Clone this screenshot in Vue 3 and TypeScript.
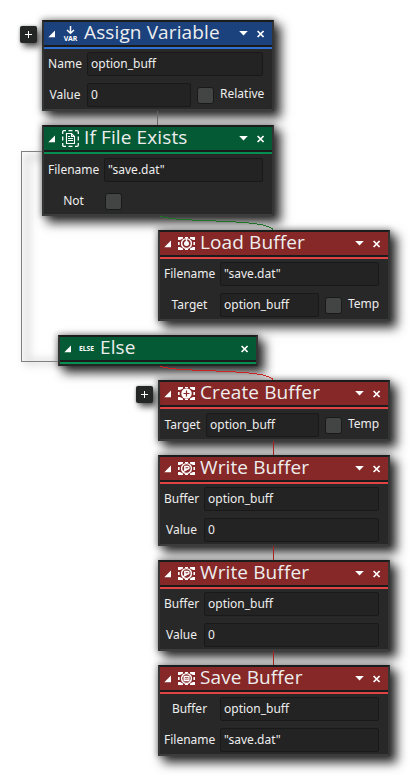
<script setup lang="ts">
type IconName = 'var' | 'file' | 'else' | 'load' | 'create' | 'write' | 'save'
interface Row {
  label: string
  value?: string
  check?: string
  checkbox?: boolean
}
interface ActionNode {
  id: number
  x: number
  y: number
  title: string
  icon: IconName
  tone: 'blue' | 'green' | 'red'
  size: string
  labels: string
  rows: Row[]
  menu: boolean
  add?: boolean
}

const nodes: ActionNode[] = [
  { id: 1, x: 42, y: 20, title: 'Assign Variable', icon: 'var', tone: 'blue', size: 'tall', labels: 'labels-s', menu: true, add: true,
    rows: [{ label: 'Name', value: 'option_buff' }, { label: 'Value', value: '0', check: 'Relative' }] },
  { id: 2, x: 42, y: 125, title: 'If File Exists', icon: 'file', tone: 'green', size: 'tall offset', labels: 'labels-l', menu: true,
    rows: [{ label: 'Filename', value: '"save.dat"' }, { label: 'Not', checkbox: true }] },
  { id: 3, x: 158, y: 230, title: 'Load Buffer', icon: 'load', tone: 'red', size: 'tall', labels: 'labels-l', menu: true,
    rows: [{ label: 'Filename', value: '"save.dat"' }, { label: 'Target', value: 'option_buff', check: 'Temp' }] },
  { id: 4, x: 58, y: 335, title: 'Else', icon: 'else', tone: 'green', size: 'bar', labels: '', menu: false, rows: [] },
  { id: 5, x: 158, y: 380, title: 'Create Buffer', icon: 'create', tone: 'red', size: 'short offset', labels: 'labels-t', menu: true, add: true,
    rows: [{ label: 'Target', value: 'option_buff', check: 'Temp' }] },
  { id: 6, x: 158, y: 455, title: 'Write Buffer', icon: 'write', tone: 'red', size: 'tall', labels: 'labels-m', menu: true,
    rows: [{ label: 'Buffer', value: 'option_buff' }, { label: 'Value', value: '0' }] },
  { id: 7, x: 158, y: 560, title: 'Write Buffer', icon: 'write', tone: 'red', size: 'tall', labels: 'labels-m', menu: true,
    rows: [{ label: 'Buffer', value: 'option_buff' }, { label: 'Value', value: '0' }] },
  { id: 8, x: 158, y: 665, title: 'Save Buffer', icon: 'save', tone: 'red', size: 'tall', labels: 'labels-l', menu: true,
    rows: [{ label: 'Buffer', value: 'option_buff' }, { label: 'Filename', value: '"save.dat"' }] },
]
</script>

<template>
  <main class="canvas">
    <div class="branch"></div>
    <div v-for="n in nodes" :key="'s' + n.id" class="shade" :class="n.size" :style="{ left: n.x + 'px', top: n.y + 'px' }"></div>
    <svg class="links" width="410" height="776" viewBox="0 0 410 776" fill="none">
      <path d="M157.500 111V125" stroke="#666" />
      <path d="M42 151.500H21.500V361.500H58" stroke="#808080" />
      <path d="M158 215C168 224 272 217 273.500 231" stroke="#1d7428" />
      <path d="M158 365C168 374 272 367 273.500 381" stroke="#cb2424" />
      <path d="M273.500 441V455M273.500 546V560M273.500 651V665" stroke="#a92222" />
    </svg>

    <section v-for="n in nodes" :key="n.id" class="node" :class="[n.tone, n.size]" :style="{ left: n.x + 'px', top: n.y + 'px' }">
      <button v-if="n.add" class="add" aria-label="Add">
        <svg width="17" height="17" viewBox="0 0 17 17"><path d="M5 8.500H12M8.500 5V12" stroke="#fff" /></svg>
      </button>
      <header class="head">
        <svg class="fold" width="8" height="8" viewBox="0 0 8 8"><path d="M7 0.500V7.200H0.300Z" fill="#fff" /></svg>
        <svg v-if="n.icon === 'var'" class="icon" width="17" height="17" viewBox="0 0 17 17">
          <path d="M8.500 1V8M5 5L8.500 8.200L12 5" fill="none" stroke="#fff" stroke-width="1.500" />
          <text x="1.800" y="16" font-size="7" font-weight="700" textLength="13.500" lengthAdjust="spacingAndGlyphs" fill="#fff">VAR</text>
        </svg>
        <svg v-else-if="n.icon === 'else'" class="icon" width="17" height="17" viewBox="0 0 17 17">
          <text x="0.900" y="10.700" font-size="6.500" font-weight="700" textLength="15.200" lengthAdjust="spacingAndGlyphs" fill="#fff">ELSE</text>
        </svg>
        <svg v-else-if="n.icon === 'file'" class="icon" width="17" height="17" viewBox="0 0 17 17" fill="none" stroke="#fff">
          <path d="M0.700 4V2Q0.700 0.700 2 0.700H4M6.500 0.700H10.500M13 0.700H15Q16.300 0.700 16.300 2V4M16.300 6.500V10.500M16.300 13V15Q16.300 16.300 15 16.300H13M10.500 16.300H6.500M4 16.300H2Q0.700 16.300 0.700 15V13M0.700 10.500V6.500" stroke-width="1.300" />
          <path d="M4.500 3.500H9.500L12.500 6.500V13.500H4.500ZM9.500 3.500V6.500H12.500M6 6.500H8M6 8.500H11M6 10.500H11" stroke-width="1.150" />
        </svg>
        <svg v-else class="icon" width="17" height="17" viewBox="0 0 17 17" fill="none" stroke="#fff">
          <path d="M0 2H5V3.500L2 5H0ZM17 2H12V3.500L15 5H17ZM0 15H5V13.500L2 12H0ZM17 15H12V13.500L15 12H17ZM0 7H1.600V10H0ZM15.400 7H17V10H15.400ZM7 2H10V3H7ZM7 14H10V15H7Z" fill="#fff" stroke="none" />
          <template v-if="n.icon === 'create'">
            <circle cx="8.500" cy="8.500" r="5.200" fill="#fff" stroke="none" />
            <path d="M5.500 8.500H11.500M8.500 5.500V11.500" stroke="#862828" stroke-width="1.200" />
          </template>
          <template v-else>
            <circle cx="8.500" cy="8.500" r="4.900" stroke-width="1.400" />
            <g v-if="n.icon === 'load'">
              <circle cx="8.500" cy="8.500" r="2.500" fill="#fff" stroke="none" />
              <path d="M8.500 3.800V7" stroke-width="1.400" />
            </g>
            <path v-else-if="n.icon === 'write'" d="M6.800 10.500V6.500H9.800Q11 6.500 11 7.700T9.800 9H7.500M9.500 9.200L4.500 12" stroke-width="1.400" />
            <path v-else d="M6.200 6.500H10.900V10.700H6.200ZM7 8.800H10" stroke-width="1.300" />
          </template>
        </svg>
        <h2 class="title">{{ n.title }}</h2>
        <svg v-if="n.menu" class="menu" width="9" height="5" viewBox="0 0 9 5"><path d="M0.200 0H8.800L4.500 4.500Z" fill="#fff" /></svg>
        <svg class="close" width="8" height="8" viewBox="0 0 8 8"><path d="M0.600 1L6.600 7M6.600 1L0.600 7" stroke="#fff" stroke-width="1.700" /></svg>
      </header>
      <div class="stripe"></div>
      <div v-if="n.rows.length" class="body" :class="n.labels">
        <div v-for="r in n.rows" :key="r.label" class="row">
          <span class="label">{{ r.label }}</span>
          <span v-if="r.value !== undefined" class="field">{{ r.value }}</span>
          <i v-if="r.check || r.checkbox" class="check" :class="{ lone: r.checkbox }"></i>
          <span v-if="r.check" class="check-label" :class="{ wide: r.check === 'Relative' }">{{ r.check }}</span>
        </div>
      </div>
    </section>
  </main>
</template>

<style>
body {
  margin: 0;
  background: #fff;
}
</style>

<style scoped>
.canvas {
  position: relative;
  width: 410px;
  height: 776px;
  overflow: hidden;
  background: #fff;
  font-family: "Noto Sans", "Open Sans", sans-serif;
}
.canvas * {
  box-sizing: border-box;
}
.links {
  position: absolute;
  left: 0;
  top: 0;
  shape-rendering: crispEdges;
}
.branch {
  position: absolute;
  left: 21px;
  top: 151px;
  width: 60px;
  height: 211px;
  border: 6px solid rgba(0, 0, 0, 0.14);
  border-right: 0;
  transform: translate(3px, 3px);
  filter: blur(4px);
}
.shade,
.node {
  position: absolute;
  width: 232px;
}
.shade {
  box-shadow: 6px 6px 10px 1px rgba(0, 0, 0, 0.78), 0 0 6px 1px rgba(0, 0, 0, 0.35);
}
.tall {
  height: 91px;
}
.short {
  height: 61px;
}
.bar {
  width: 200px;
  height: 31px;
}
.node {
  background: #282828;
  border: 2px solid #1b1d1d;
  border-left-color: #343636;
  border-right-color: #343636;
  border-bottom-color: #3b3d3d;
  color: #eee;
}
.bar.node {
  border-bottom-color: #242626;
}
.head {
  display: flex;
  align-items: center;
  height: 23px;
  padding: 0 7px 0 4px;
  background: var(--head);
}
.blue {
  --head: #1c427e;
  --line: #2d72d3;
}
.green {
  --head: #045a34;
  --line: #078f52;
}
.red {
  --head: #862828;
  --line: #e04343;
}
.stripe {
  height: 2px;
  margin-top: 2px;
  background: var(--line);
  box-shadow: 0 -2px #1b1b1b;
}
.fold {
  flex: none;
}
.icon {
  flex: none;
  margin-left: 6px;
}
.title {
  flex: 1;
  margin: -4px 0 0 5px;
  font-family: "Open Sans", "Noto Sans", sans-serif;
  font-size: 19px;
  font-weight: 370;
  letter-spacing: 0.120px;
  line-height: 22px;
  white-space: nowrap;
}
.menu {
  flex: none;
  margin-right: 9px;
}
.close {
  flex: none;
}
.body {
  display: grid;
  gap: 7px;
  padding: 3px 9px 0 4px;
  font-size: 12px;
  line-height: 24px;
}
.offset .body {
  padding-top: 4px;
}
.row {
  display: flex;
  align-items: center;
  height: 24px;
}
.label {
  flex: none;
  text-align: center;
  margin-right: 5px;
}
.labels-s .label {
  width: 34px;
}
.labels-m .label {
  width: 35px;
}
.labels-t .label {
  width: 37px;
}
.labels-l .label {
  width: 51px;
}
.field {
  flex: 1;
  height: 24px;
  padding-left: 3px;
  border: 1px solid #191919;
  border-radius: 2px;
  background: #232323;
  line-height: 21px;
}
.check {
  flex: none;
  width: 17px;
  height: 17px;
  margin-left: 6px;
  border: 1px solid #191919;
  border-radius: 3px;
  background: #434545;
}
.check.lone {
  margin-left: 1px;
}
.check-label {
  flex: none;
  width: 31px;
  height: 24px;
  margin-left: 6px;
  line-height: 22px;
  white-space: nowrap;
}
.check-label.wide {
  width: 43px;
}
.add {
  position: absolute;
  left: -24px;
  top: 4px;
  width: 17px;
  height: 17px;
  padding: 0;
  border: 0;
  border-radius: 2px;
  background: #242626;
  box-shadow: 3px 4px 6px rgba(0, 0, 0, 0.65), 0 0 3px rgba(0, 0, 0, 0.3);
}
.add svg {
  display: block;
}
</style>
